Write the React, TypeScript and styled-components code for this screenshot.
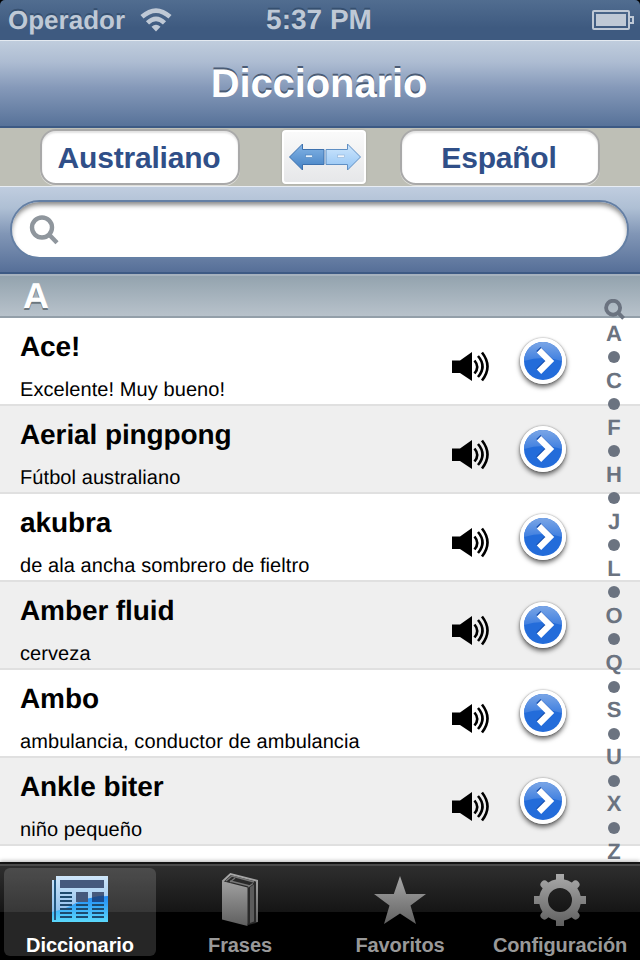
import { useState } from 'react';
import styled, { createGlobalStyle } from 'styled-components';

interface Entry {
    Term: string;
    Meaning: string;
}

const ENTRIES: Entry[] = [
    { Term: 'Ace!', Meaning: 'Excelente! Muy bueno!' },
    { Term: 'Aerial pingpong', Meaning: 'Fútbol australiano' },
    { Term: 'akubra', Meaning: 'de ala ancha sombrero de fieltro' },
    { Term: 'Amber fluid', Meaning: 'cerveza' },
    { Term: 'Ambo', Meaning: 'ambulancia, conductor de ambulancia' },
    { Term: 'Ankle biter', Meaning: 'niño pequeño' },
];

const INDEX_LETTERS = ['A', 'C', 'F', 'H', 'J', 'L', 'O', 'Q', 'S', 'U', 'X', 'Z'];

const WifiIcon = () => (
    <svg width='32' height='24' viewBox='0 0 32 24' fill='none' stroke='#bfc9d6'>
        <path d='M2 8.800q14-12.500 28 0' strokeWidth='4.600' />
        <path d='M7.500 14.800q8.500-8 17 0' strokeWidth='4.600' />
        <path d='M16 23.500l-4.500-4.800q4.500-4 9 0z' fill='#bfc9d6' stroke='none' />
    </svg>
);

const BatteryIcon = () => (
    <svg width='42' height='20' viewBox='0 0 42 20'>
        <rect x='1' y='1' width='36' height='18' rx='1' fill='none' stroke='#bfc9d6' strokeWidth='2' />
        <rect x='4' y='4' width='30' height='12' fill='#bfc9d6' />
        <path d='M38 7h3v6h-3' fill='none' stroke='#bfc9d6' strokeWidth='2' />
    </svg>
);

const SwapIcon = () => (
    <svg width='74' height='30' viewBox='0 0 74 30'>
        <defs>
            <linearGradient id='swapDark' x1='0' y1='0' x2='0' y2='1'>
                <stop offset='0' stopColor='#85b5e6' />
                <stop offset='1' stopColor='#4381c4' />
            </linearGradient>
            <linearGradient id='swapLight' x1='0' y1='0' x2='0' y2='1'>
                <stop offset='0' stopColor='#cfe7fd' />
                <stop offset='1' stopColor='#93c4f4' />
            </linearGradient>
        </defs>
        <path d='M1.500 15L14.500 2v5.500H36v15H14.500V28z' fill='url(#swapDark)' stroke='#3c70ad' />
        <path d='M72.500 15L59.500 2v5.500H38v15h21.500V28z' fill='url(#swapLight)' stroke='#5f8fc4' />
        <rect x='17.500' y='13' width='7' height='2.500' fill='#e6f2fd' stroke='#4a7fba' strokeWidth='.6' />
        <rect x='49.500' y='13' width='7' height='2.500' fill='#f1f6fc' stroke='#8fb2d8' strokeWidth='.6' />
    </svg>
);

const SearchIcon = ({ size, color, weight }: { size: number; color: string; weight: number }) => (
    <svg width={ size } height={ size } viewBox='0 0 30 30' fill='none' stroke={ color } strokeWidth={ weight }>
        <circle cx='13' cy='12.500' r='10' />
        <path d='M20 19.500l8 8.200' />
    </svg>
);

const SpeakerIcon = () => (
    <svg width='40' height='32' viewBox='0 0 40 32'>
        <path d='M0 9.500h8L20 1v29L8 22H0z' />
        <g fill='none' stroke='#000' strokeWidth='2.600'>
            <path d='M22.500 9.500q5.500 6.500 0 13' />
            <path d='M26 5q9 10.500 0 21' />
            <path d='M30 1.500q11 14 0 28' />
        </g>
    </svg>
);

const DisclosureIcon = () => (
    <svg width='46' height='46' viewBox='0 0 46 46'>
        <defs>
            <linearGradient id='gloss' x1='0' y1='0' x2='0' y2='1'>
                <stop offset='0' stopColor='#7ba6e6' />
                <stop offset='1' stopColor='#3f7fe0' />
            </linearGradient>
        </defs>
        <circle cx='23' cy='23' r='23' fill='#fff' />
        <circle cx='23' cy='23' r='19' fill='#236cda' />
        <path d='M4 23a19 19 0 0 1 38 0q-19-6-38 0z' fill='url(#gloss)' />
        <path d='M19 12.200L29.800 23 19 33.800' transform='translate(-.6 -1.200)' fill='none' stroke='#174fae' strokeWidth='6' />
        <path d='M19 12.200L29.800 23 19 33.800' fill='none' stroke='#fff' strokeWidth='6.200' />
    </svg>
);

const NewspaperIcon = () => (
    <svg width='56' height='56' viewBox='0 0 56 56'>
        <defs>
            <linearGradient id='paper' x1='0' y1='0' x2='0' y2='1'>
                <stop offset='0' stopColor='#cfe6fa' />
                <stop offset='1' stopColor='#7db6ea' />
            </linearGradient>
            <linearGradient id='wave' x1='0' y1='0' x2='0' y2='1'>
                <stop offset='0' stopColor='#208af5' />
                <stop offset='1' stopColor='#5bd8fb' />
            </linearGradient>
        </defs>
        <path d='M0 8h4V4h52v46H0z' fill='url(#paper)' />
        <path d='M0 40Q14 37 24 31t32-7v26H0z' fill='url(#wave)' />
        <path d='M3 8v40' stroke='#22567f' strokeWidth='2' />
        <path d='M8 8h44v8H8zM24 20h12v10H24zM40 20h12v10H40z' fill='#46597d' />
        <path d='M40 25.500q6-1.500 12-2V30H40z' fill='#1c4b8c' />
        <g stroke='#1d4a6e' strokeWidth='2'>
            <path d='M8 21h12M8 25h12M8 29h12M8 33h12M8 37h12M8 41h12M8 45h12' />
            <path d='M24 33h12M24 37h12M24 41h12M24 45h12' />
            <path d='M40 33h12M40 37h12M40 41h12M40 45h12' />
        </g>
    </svg>
);

const GrayGradient = ({ id }: { id: string }) => (
    <defs>
        <linearGradient id={ id } gradientUnits='userSpaceOnUse' x1='0' y1='2' x2='0' y2='54'>
            <stop offset='0' stopColor='#aaa' />
            <stop offset='1' stopColor='#5f5f5f' />
        </linearGradient>
    </defs>
);

const BooksIcon = () => (
    <svg width='56' height='56' viewBox='0 0 56 56'>
        <GrayGradient id='books' />
        <path d='M10 9l8-7.500L46 8v42l-2 1-8 2z' fill='#292929' />
        <path d='M10 9v38.500l25.500 6.500V15.500z' fill='url(#books)' />
        <path d='M10.500 9.500l8-7.500L45 8.800V50' fill='none' stroke='url(#books)' strokeWidth='2' />
        <path d='M38 15l4-2.500v37L38 51z' fill='#5c5c5c' />
        <path d='M14 9l6-5 22 6M18 10l5-4M36 15l5-3.500M18 9l20 5' fill='none' stroke='#777' strokeWidth='1.300' />
    </svg>
);

const StarIcon = () => (
    <svg width='56' height='56' viewBox='0 0 56 56'>
        <GrayGradient id='star' />
        <path d='M28 4l6.200 18H54L38.500 33.500 44 52 28 41.500 12 52l5.500-18.500L2 22h19.800z' fill='url(#star)' />
    </svg>
);

const GearIcon = () => (
    <svg width='56' height='56' viewBox='0 0 56 56'>
        <GrayGradient id='gear' />
        <g stroke='url(#gear)' fill='none'>
            <circle cx='28' cy='28' r='16.500' strokeWidth='9' />
            <path d='M28 2v8.500M28 45.500V54M2 28h8.500M45.500 28H54' strokeWidth='8' />
            <path d='M12.500 12.500l4 4M43.500 12.500l-4 4M12.500 43.500l4-4M43.500 43.500l-4-4' strokeWidth='8' strokeLinecap='round' />
        </g>
    </svg>
);

const TABS = [
    { Label: 'Diccionario', Icon: NewspaperIcon },
    { Label: 'Frases', Icon: BooksIcon },
    { Label: 'Favoritos', Icon: StarIcon },
    { Label: 'Configuración', Icon: GearIcon },
];

const App = () => {
    const [languages, setLanguages] = useState(['Australiano', 'Español']);
    const [activeTab, setActiveTab] = useState('Diccionario');
    const [query, setQuery] = useState('');

    return (
        <Screen>
            <GlobalStyle />
            <StatusBar>
                <Carrier>Operador <WifiIcon /></Carrier>
                <Clock>5:37 PM</Clock>
                <BatteryIcon />
            </StatusBar>

            <NavBar>Diccionario</NavBar>

            <LanguageBar>
                <LanguageBtn>{ languages[0] }</LanguageBtn>
                <SwapBtn onClick={ () => setLanguages([languages[1], languages[0]]) }>
                    <SwapIcon />
                </SwapBtn>
                <LanguageBtn>{ languages[1] }</LanguageBtn>
            </LanguageBar>

            <SearchBar>
                <SearchField>
                    <SearchIcon size={ 30 } color='#8f969d' weight={ 4.4 } />
                    <SearchInput value={ query } onChange={ (e) => setQuery(e.target.value) } />
                </SearchField>
            </SearchBar>

            <Content>
                <SectionHeader>A</SectionHeader>
                { ENTRIES.map((entry, i) => (
                    <Row key={ entry.Term } $shaded={ i % 2 === 1 }>
                        <RowText>
                            <Term>{ entry.Term }</Term>
                            <Meaning>{ entry.Meaning }</Meaning>
                        </RowText>
                        <SpeakBtn><SpeakerIcon /></SpeakBtn>
                        <DetailBtn><DisclosureIcon /></DetailBtn>
                    </Row>
                )) }
                <SectionIndex>
                    <IndexCell><SearchIcon size={ 21 } color='#6b7380' weight={ 5.5 } /></IndexCell>
                    { INDEX_LETTERS.map((letter, i) => (
                        <IndexGroup key={ letter }>
                            { i > 0 && <IndexCell><IndexDot /></IndexCell> }
                            <IndexCell>{ letter }</IndexCell>
                        </IndexGroup>
                    )) }
                </SectionIndex>
            </Content>

            <TabBar>
                { TABS.map(({ Label, Icon }) => (
                    <Tab key={ Label } $active={ Label === activeTab } onClick={ () => setActiveTab(Label) }>
                        <Icon />
                        <TabLabel>{ Label }</TabLabel>
                    </Tab>
                )) }
            </TabBar>
        </Screen>
    );
};

const GlobalStyle = createGlobalStyle`
    * {
        box-sizing: border-box;
    }

    body {
        margin: 0;
        background: #000;
        font-family: "Liberation Sans", Arial, sans-serif;
        text-rendering: geometricPrecision;
    }

    button {
        padding: 0;
        border: none;
        background: none;
        font-family: inherit;
    }

    svg {
        display: block;
        flex: none;
    }
`;

const Screen = styled.div`
    display: flex;
    flex-direction: column;
    width: 640px;
    height: 960px;
    overflow: hidden;
    border-radius: 5px 5px 0 0;
`;

const StatusBar = styled.header`
    display: grid;
    grid-template-columns: 1fr auto 1fr;
    align-items: center;
    height: 40px;
    padding: 0 6px 2px 8px;
    color: #bfc9d6;
    font-weight: bold;
    text-shadow: 0 -2px 0 #365070;
    background: linear-gradient(#516d90, #3e5a80 70%);

    & > svg {
        justify-self: end;
    }
`;

const Carrier = styled.div`
    display: flex;
    align-items: center;
    gap: 15px;
    font-size: 26px;
    line-height: 40px;
`;

const Clock = styled.div`
    margin-right: 4px;
    font-size: 28px;
    line-height: 38px;
`;

const NavBar = styled.h1`
    flex: none;
    height: 88px;
    margin: 0;
    padding-right: 2px;
    border-top: 1px solid #e4eaf1;
    border-bottom: 2px solid #3d5a84;
    color: #fff;
    font-size: 40px;
    line-height: 87px;
    letter-spacing: -.1px;
    text-align: center;
    text-shadow: 0 -2px 0 #4b5c75;
    background: linear-gradient(#c0cddd, #adbcd2 25%, #8599b9 55%, #577299);
`;

const LanguageBar = styled.div`
    display: flex;
    align-items: center;
    flex: none;
    height: 58px;
    padding: 0 40px;
    background: #bebfb6;
`;

const LanguageBtn = styled.button`
    width: 200px;
    height: 56px;
    padding: 2px 2px 0 0;
    border: 2px solid #a9a9a9;
    border-radius: 16px;
    color: #304f88;
    font-size: 30px;
    font-weight: bold;
    line-height: 50px;
    letter-spacing: -.2px;
    background: #fff;
    box-shadow: inset 0 2px 2px #e2e2e2, 0 1px 0 #deded9;
`;

const SwapBtn = styled.button`
    display: flex;
    justify-content: center;
    align-items: center;
    width: 84px;
    height: 54px;
    margin: 0 34px 0 42px;
    padding-left: 2px;
    border: 2px solid #fff;
    border-radius: 4px;
    background: linear-gradient(#fafafa, #e6e7e9);
    box-shadow: 0 0 2px #999;
`;

const SearchBar = styled.div`
    flex: none;
    height: 88px;
    padding: 13px 11px 0 10px;
    border-top: 1px solid #e8edf4;
    border-bottom: 2px solid #3d5a84;
    background: linear-gradient(#c0cddf, #aebfd4 25%, #8196b6 55%, #566f98);
`;

const SearchField = styled.label`
    display: flex;
    align-items: center;
    height: 59px;
    padding: 0 20px 0 17px;
    border: 2px solid #647fa4;
    border-radius: 30px;
    background: #fff;
    box-shadow: inset 0 4px 5px -1px #888;
`;

const SearchInput = styled.input`
    flex: 1;
    margin-left: 10px;
    border: none;
    outline: none;
    font-size: 28px;
    background: transparent;
`;

const Content = styled.main`
    position: relative;
    flex: 1;
    min-height: 0;
    background: #fff;
`;

const SectionHeader = styled.h2`
    height: 44px;
    margin: 0;
    padding-left: 23px;
    border-top: 2px solid #a6b2be;
    border-bottom: 2px solid #939fa9;
    color: #fff;
    font-size: 36px;
    line-height: 40px;
    text-shadow: 0 2px 0 #6b767e;
    background: linear-gradient(#93a3ae, #b8c2cb);
`;

const Row = styled.div<{ $shaded: boolean }>`
    display: flex;
    height: 88px;
    padding-left: 20px;
    border-bottom: 2px solid #e0e0e0;
    background: ${ ({ $shaded }) => $shaded ? '#efefef' : '#fff' };
`;

const RowText = styled.div`
    width: 432px;
    padding-top: 12px;
`;

const Term = styled.div`
    font-size: 28px;
    font-weight: bold;
    line-height: 34px;
    letter-spacing: -.1px;
`;

const Meaning = styled.div`
    margin-top: 13px;
    font-size: 20px;
    line-height: 26px;
    letter-spacing: .08px;
`;

const SpeakBtn = styled.button`
    align-self: flex-start;
    margin-top: 33px;
`;

const DetailBtn = styled.button`
    align-self: center;
    margin-left: 28px;
    border-radius: 50%;
    box-shadow: 0 3px 5px rgba(0, 0, 0, .6), 0 0 2px rgba(0, 0, 0, .4);
`;

/* alphabet strip floating over the right side of the list */
const SectionIndex = styled.nav`
    position: absolute;
    top: 24px;
    right: 11px;
    width: 30px;
    color: #6b7380;
    font-size: 22px;
    font-weight: bold;
`;

const IndexGroup = styled.div`
    display: flex;
    flex-direction: column;
`;

const IndexCell = styled.div`
    display: flex;
    justify-content: center;
    align-items: center;
    height: 23.55px;
    line-height: 23.55px;
`;

const IndexDot = styled.span`
    width: 12px;
    height: 12px;
    border-radius: 50%;
    background: #6b7380;
`;

const TabBar = styled.footer`
    display: grid;
    grid-template-columns: repeat(4, 160px);
    flex: none;
    height: 98px;
    border-top: 2px solid #141414;
    background: linear-gradient(#4a4a4a 2px, #2e2e2e 2px, #151515 48px, #000 48px);
    box-shadow: 0 -1px 4px rgba(0, 0, 0, .3);
    z-index: 1;
`;

const Tab = styled.button<{ $active: boolean }>`
    display: flex;
    flex-direction: column;
    align-items: center;
    height: 88px;
    margin: 4px 4px 0;
    padding-top: 4px;
    border-radius: 6px;
    color: ${ ({ $active }) => $active ? '#fff' : '#999' };
    background: ${ ({ $active }) => $active ? 'rgba(255, 255, 255, .15)' : 'transparent' };
`;

const TabLabel = styled.span`
    margin-top: 5px;
    font-size: 20px;
    font-weight: bold;
    line-height: 24px;
    letter-spacing: -.1px;
    white-space: nowrap;
`;

export default App;
